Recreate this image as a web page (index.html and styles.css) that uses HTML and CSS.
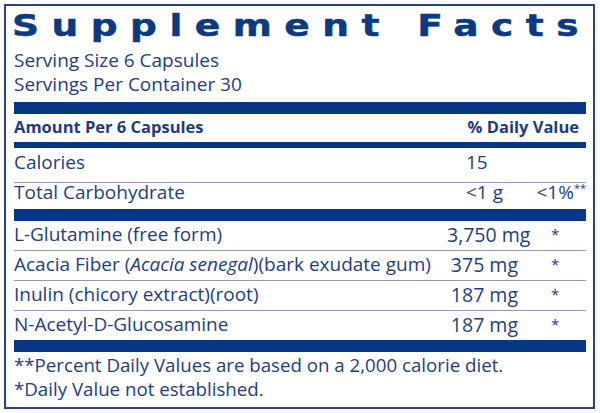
FILE: index.html
```html
<!DOCTYPE html>
<html lang="en">
<head>
<meta charset="utf-8">
<title>Supplement Facts</title>
<link rel="stylesheet" href="styles.css">
</head>
<body>
<div class="label">
  <h1 class="title">Supplement Facts</h1>
  <div class="serving-block">
    <p class="serving">Serving Size 6 Capsules</p>
    <p class="serving">Servings Per Container 30</p>
  </div>
  <div class="bar bar-thick bar-first"></div>
  <div class="head">
    <span>Amount Per 6 Capsules</span>
    <span class="head-dv">% Daily Value</span>
  </div>
  <div class="bar bar-medium"></div>
  <div class="row row-cal">
    <span class="name">Calories</span>
    <span class="amt amt-left">15</span>
    <span class="dv"></span>
  </div>
  <div class="row row-carb">
    <span class="name">Total Carbohydrate</span>
    <span class="amt amt-left">&lt;1 g</span>
    <span class="dv dv-right">&lt;1%<sup class="stars">**</sup></span>
  </div>
  <div class="bar bar-thick"></div>
  <div class="row row-ing">
    <span class="name">L-Glutamine (free form)</span>
    <span class="amt">3,750 mg</span>
    <span class="dv dv-star">*</span>
  </div>
  <div class="row row-ing">
    <span class="name">Acacia Fiber (<em>Acacia senegal</em>)(bark exudate gum)</span>
    <span class="amt">375 mg</span>
    <span class="dv dv-star">*</span>
  </div>
  <div class="row row-ing">
    <span class="name">Inulin (chicory extract)(root)</span>
    <span class="amt">187 mg</span>
    <span class="dv dv-star">*</span>
  </div>
  <div class="row row-ing row-last">
    <span class="name">N-Acetyl-D-Glucosamine</span>
    <span class="amt">187 mg</span>
    <span class="dv dv-star">*</span>
  </div>
  <div class="bar bar-thick"></div>
  <div class="notes">
    <p class="note">**Percent Daily Values are based on a 2,000 calorie diet.</p>
    <p class="note">*Daily Value not established.</p>
  </div>
</div>
</body>
</html>
```

FILE: styles.css
```css
* {
  box-sizing: border-box;
}

html, body {
  margin: 0;
  padding: 0;
  background: #ffffff;
}

body {
  font-family: "Open Sans", "Noto Sans", sans-serif;
  color: #213d8a;
}

.label {
  width: 591px;
  height: 405px;
  margin: 4px 0 0 4px;
  border: 2px solid #2a4191;
  padding: 0 7px 0 8px;
  display: flex;
  flex-direction: column;
  overflow: hidden;
}

.title {
  margin: 4.5px 0 0 -2px;
  font-family: "DejaVu Sans", sans-serif;
  font-weight: bold;
  font-size: 30px;
  line-height: 30px;
  height: 30px;
  letter-spacing: 10px;
  color: #0b3a84;
  white-space: nowrap;
  -webkit-text-stroke: 0.5px #0b3a84;
  transform: scaleX(1.25);
  transform-origin: left center;
}

.serving-block {
  margin-top: 8.7px;
}

.serving {
  margin: 0;
  font-size: 19px;
  line-height: 23.5px;
}

.bar {
  background: #083785;
  flex: none;
}

.bar-thick {
  height: 12px;
}

.bar-first {
  margin-top: 5.6px;
}

.bar-medium {
  height: 6px;
}

.head {
  display: flex;
  justify-content: space-between;
  font-weight: bold;
  font-size: 16.5px;
  line-height: 26px;
  height: 28px;
  padding-bottom: 2px;
  color: #1e3a86;
}

.head-dv {
  padding-right: 7px;
}

.row {
  display: grid;
  grid-template-columns: 1fr 72px 67px;
  font-size: 19px;
  white-space: nowrap;
}

.row-cal {
  line-height: 28px;
  height: 35px;
  padding-bottom: 6px;
  border-bottom: 1px solid #9099b9;
}

.row-carb {
  line-height: 18px;
  height: 26px;
  padding-bottom: 8px;
}

.row-ing {
  line-height: 27px;
  height: 30px;
  padding-bottom: 2px;
  border-bottom: 1px solid #9099b9;
}

.row-last {
  border-bottom: none;
  height: 29px;
}

.name em {
  font-style: italic;
}

.amt {
  text-align: right;
  padding-right: 1px;
  font-size: 19.5px;
}

.amt-left {
  text-align: left;
  padding-left: 19px;
  padding-right: 0;
  font-size: 19px;
}

.dv-right {
  text-align: right;
}

.dv-star {
  text-align: left;
  padding-left: 32px;
  font-size: 15px;
}

.stars {
  font-size: 11px;
  vertical-align: 7px;
  line-height: 0;
  letter-spacing: 0;
}

.notes {
  margin-top: 1.5px;
}

.note {
  margin: 0;
  font-size: 18.7px;
  line-height: 23.3px;
}
```
